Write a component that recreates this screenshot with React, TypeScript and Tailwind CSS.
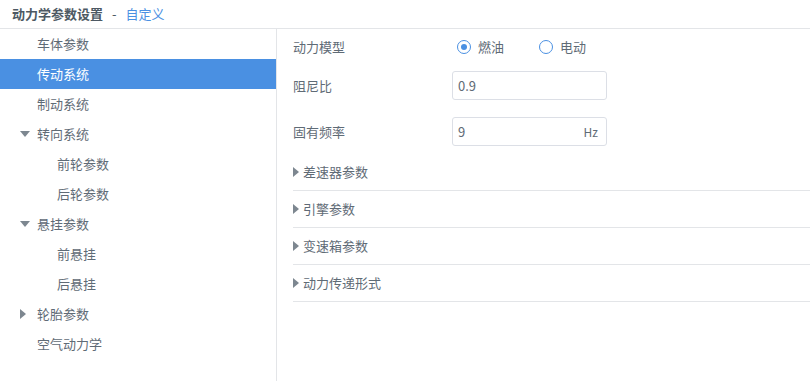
import React from 'react';

type NavItem = {
  label: string;
  level: number;
  arrow?: 'down' | 'right';
  active?: boolean;
};

const navItems: NavItem[] = [
  { label: '车体参数', level: 0 },
  { label: '传动系统', level: 0, active: true },
  { label: '制动系统', level: 0 },
  { label: '转向系统', level: 0, arrow: 'down' },
  { label: '前轮参数', level: 1 },
  { label: '后轮参数', level: 1 },
  { label: '悬挂参数', level: 0, arrow: 'down' },
  { label: '前悬挂', level: 1 },
  { label: '后悬挂', level: 1 },
  { label: '轮胎参数', level: 0, arrow: 'right' },
  { label: '空气动力学', level: 0 },
];

const sections = ['差速器参数', '引擎参数', '变速箱参数', '动力传递形式'];

function Caret({ dir }: { dir: 'down' | 'right' }) {
  if (dir === 'down') {
    return (
      <svg width="10" height="6" viewBox="0 0 10 6" className="text-[#7d8790]">
        <path d="M0 0 L10 0 L5 6 Z" fill="currentColor" />
      </svg>
    );
  }
  return (
    <svg width="6" height="10" viewBox="0 0 6 10" className="text-[#7d8790]">
      <path d="M0 0 L6 5 L0 10 Z" fill="currentColor" />
    </svg>
  );
}

function Radio({ checked, label }: { checked?: boolean; label: string }) {
  return (
    <label className="flex items-center gap-[7px] cursor-pointer">
      <span className="w-[14px] h-[14px] rounded-full border-[1.5px] border-[#4a90e2] flex items-center justify-center bg-white">
        {checked && <span className="w-[6px] h-[6px] rounded-full bg-[#4a90e2]" />}
      </span>
      <span>{label}</span>
    </label>
  );
}

export default function App() {
  return (
    <div
      className="w-[810px] h-[381px] bg-white text-[13px] text-[#5f6b76] flex flex-col overflow-hidden"
      style={{ fontFamily: '"Noto Sans CJK SC", "Noto Sans", sans-serif' }}
    >
      <div className="h-[29px] shrink-0 border-b border-[#e3e5e8] flex items-center pl-[12px]">
        <span className="font-semibold text-[#4d5963]">动力学参数设置</span>
        <span className="mx-[9px] text-[#4d5963]">-</span>
        <span className="text-[#4a90e2]">自定义</span>
      </div>
      <div className="flex flex-1 min-h-0">
        <div className="w-[277px] shrink-0 border-r border-[#e3e5e8]">
          {navItems.map((item) => (
            <div
              key={item.label}
              className={`h-[30px] flex items-center relative ${
                item.active ? 'bg-[#4a90e2] text-white' : ''
              } ${item.level === 1 ? 'pl-[57px]' : 'pl-[37px]'}`}
            >
              {item.arrow && (
                <span className="absolute left-[20px] top-0 h-full flex items-center">
                  <Caret dir={item.arrow} />
                </span>
              )}
              {item.label}
            </div>
          ))}
        </div>
        <div className="flex-1 pl-[16px] pt-[2px]">
          <div className="h-[32px] flex items-center">
            <span className="w-[164px]">动力模型</span>
            <div className="flex items-center gap-[35px]">
              <Radio checked label="燃油" />
              <Radio label="电动" />
            </div>
          </div>
          <div className="flex items-center mt-[8px]">
            <span className="w-[159px]">阻尼比</span>
            <div className="w-[155px] h-[29px] border border-[#dcdfe6] rounded-[3px] flex items-center px-[5px]">
              0.9
            </div>
          </div>
          <div className="flex items-center mt-[17px]">
            <span className="w-[159px]">固有频率</span>
            <div className="w-[155px] h-[29px] border border-[#dcdfe6] rounded-[3px] flex items-center justify-between px-[5px] pr-[8px]">
              <span>9</span>
              <span className="text-[12px]">Hz</span>
            </div>
          </div>
          <div className="mt-[8px]">
            {sections.map((s) => (
              <div key={s} className="h-[37px] border-b border-[#e3e5e8] flex items-center gap-[4px]">
                <Caret dir="right" />
                <span>{s}</span>
              </div>
            ))}
          </div>
        </div>
      </div>
    </div>
  );
}
